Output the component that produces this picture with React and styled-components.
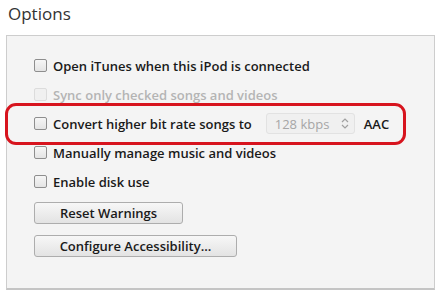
import React from 'react'
import styled, { createGlobalStyle } from 'styled-components'

const Global = createGlobalStyle`
  html, body {
    margin: 0;
    background: #ffffff;
    font-family: 'Open Sans', 'Noto Sans', sans-serif;
  }
`

const Page = styled.div`
  width: 439px;
  height: 295px;
  display: flex;
  flex-direction: column;
  overflow: hidden;
`

const Title = styled.h1`
  margin: 0;
  height: 35px;
  padding: 2px 0 0 8px;
  box-sizing: border-box;
  font-size: 17px;
  font-weight: 400;
  color: #333;
  line-height: 24px;
`

const Panel = styled.div`
  margin: 0 4px 0 6px;
  height: 255px;
  box-sizing: border-box;
  background: #f4f4f4;
  border: 1px solid #cdcdcd;
  border-bottom: 2px solid #c4c4c4;
  padding: 15px 0 0 27px;
  display: flex;
  flex-direction: column;
`

const Row = styled.label`
  position: relative;
  height: 29px;
  display: flex;
  align-items: center;
  gap: 6px;
  font-size: 13px;
  font-weight: 600;
  color: ${p => (p.disabled ? '#b4b4b4' : '#1a1a1a')};

  ${p => p.highlight && `
    &::before {
      content: '';
      position: absolute;
      left: -29px;
      top: -6px;
      width: 401px;
      height: 42px;
      box-sizing: border-box;
      border: 3px solid #d7141e;
      border-radius: 11px;
    }
  `}
`

const Check = styled.span`
  width: 13px;
  height: 13px;
  box-sizing: border-box;
  flex: none;
  border: 1px solid ${p => (p.disabled ? '#dcdcdc' : '#8e8e8e')};
  border-radius: 2px;
  background: ${p => (p.disabled ? '#f0f0f0' : 'linear-gradient(#f6f6f6, #e4e4e4)')};
`

const Select = styled.span`
  margin-left: 8px;
  width: 89px;
  height: 21px;
  box-sizing: border-box;
  display: flex;
  align-items: center;
  justify-content: space-between;
  padding: 0 5px 0 8px;
  border: 1px solid #e2e2e2;
  border-radius: 3px;
  background: #f0f0f0;
  color: #a6a6a6;
  font-weight: 400;
`

const Suffix = styled.span`
  margin-left: 3px;
`

const Button = styled.button`
  margin-top: ${p => p.top}px;
  width: ${p => p.w}px;
  height: 22px;
  padding: 0;
  border: 1px solid #adadad;
  border-radius: 3px;
  background: linear-gradient(#f7f7f7, #e3e3e3);
  font-family: inherit;
  font-size: 13px;
  font-weight: 600;
  color: #1a1a1a;
`

const Chevrons = () => (
  <svg width="8" height="11" viewBox="0 0 8 11" fill="none" stroke="#a0a0a0" strokeWidth="1.2">
    <path d="M1 4 L4 1 L7 4" />
    <path d="M1 7 L4 10 L7 7" />
  </svg>
)

export default function App() {
  return (
    <Page>
      <Global />
      <Title>Options</Title>
      <Panel>
        <Row>
          <Check />
          Open iTunes when this iPod is connected
        </Row>
        <Row disabled>
          <Check disabled />
          Sync only checked songs and videos
        </Row>
        <Row highlight>
          <Check />
          Convert higher bit rate songs to
          <Select>
            128 kbps
            <Chevrons />
          </Select>
          <Suffix>AAC</Suffix>
        </Row>
        <Row>
          <Check />
          Manually manage music and videos
        </Row>
        <Row>
          <Check />
          Enable disk use
        </Row>
        <Button top={6} w={149}>Reset Warnings</Button>
        <Button top={11} w={203}>Configure Accessibility...</Button>
      </Panel>
    </Page>
  )
}
